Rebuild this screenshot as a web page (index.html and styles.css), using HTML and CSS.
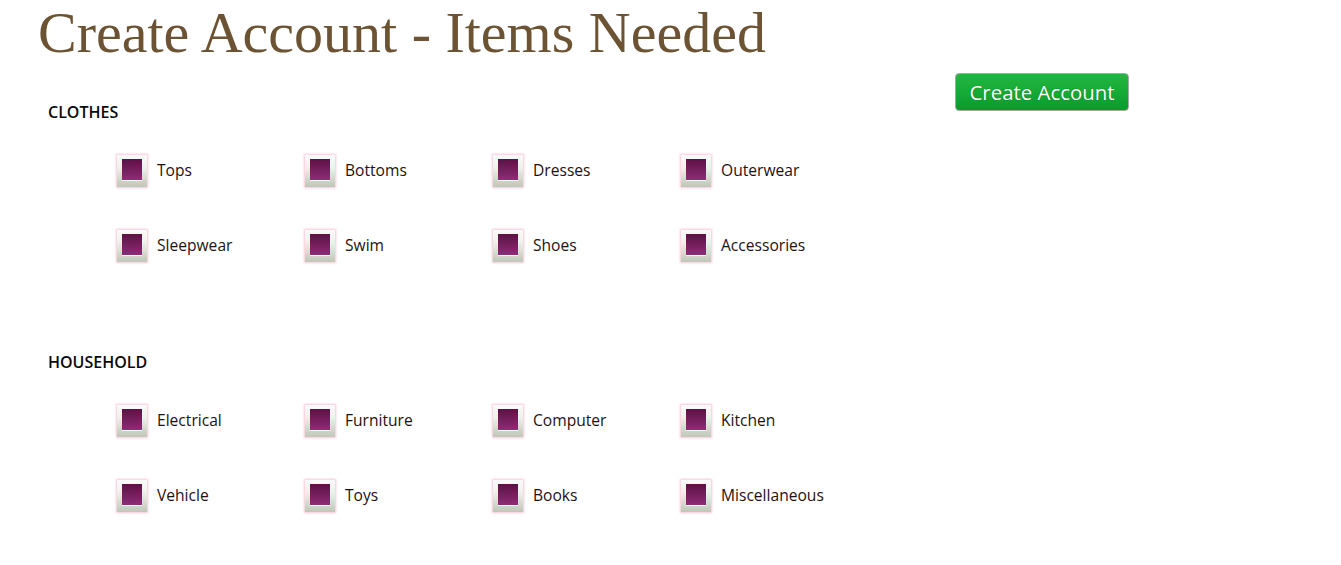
FILE: index.html
```html
<!DOCTYPE html>
<html lang="en">
<head>
<meta charset="utf-8">
<title>Create Account - Items Needed</title>
<link rel="stylesheet" href="styles.css">
</head>
<body>
<h1 class="title">Create Account - Items Needed</h1>
<div class="layout">
  <div class="sections">
    <section class="group">
      <h2 class="group-title">CLOTHES</h2>
      <div class="grid">
        <label class="item"><span class="box"><span class="fill"></span></span><span class="label">Tops</span></label>
        <label class="item"><span class="box"><span class="fill"></span></span><span class="label">Bottoms</span></label>
        <label class="item"><span class="box"><span class="fill"></span></span><span class="label">Dresses</span></label>
        <label class="item"><span class="box"><span class="fill"></span></span><span class="label">Outerwear</span></label>
        <label class="item"><span class="box"><span class="fill"></span></span><span class="label">Sleepwear</span></label>
        <label class="item"><span class="box"><span class="fill"></span></span><span class="label">Swim</span></label>
        <label class="item"><span class="box"><span class="fill"></span></span><span class="label">Shoes</span></label>
        <label class="item"><span class="box"><span class="fill"></span></span><span class="label">Accessories</span></label>
      </div>
    </section>
    <section class="group group-second">
      <h2 class="group-title">HOUSEHOLD</h2>
      <div class="grid">
        <label class="item"><span class="box"><span class="fill"></span></span><span class="label">Electrical</span></label>
        <label class="item"><span class="box"><span class="fill"></span></span><span class="label">Furniture</span></label>
        <label class="item"><span class="box"><span class="fill"></span></span><span class="label">Computer</span></label>
        <label class="item"><span class="box"><span class="fill"></span></span><span class="label">Kitchen</span></label>
        <label class="item"><span class="box"><span class="fill"></span></span><span class="label">Vehicle</span></label>
        <label class="item"><span class="box"><span class="fill"></span></span><span class="label">Toys</span></label>
        <label class="item"><span class="box"><span class="fill"></span></span><span class="label">Books</span></label>
        <label class="item"><span class="box"><span class="fill"></span></span><span class="label">Miscellaneous</span></label>
      </div>
    </section>
  </div>
  <div class="actions">
    <button class="btn" type="button">Create Account</button>
  </div>
</div>
</body>
</html>
```

FILE: styles.css
```css
html, body {
  margin: 0;
  padding: 0;
  background: #ffffff;
}

body {
  font-family: "Open Sans", "Noto Sans", sans-serif;
  color: #1e1414;
}

.title {
  margin: 3px 0 10px 0;
  padding-left: 38px;
  font-family: "Liberation Serif", "DejaVu Serif", serif;
  font-weight: normal;
  font-size: 58px;
  line-height: 60px;
  color: #6c5333;
  white-space: nowrap;
}

.layout {
  display: flex;
  align-items: flex-start;
}

.sections {
  width: 907px;
  padding-left: 48px;
  padding-top: 28px;
}

.group-title {
  margin: 0;
  font-size: 16px;
  line-height: 22px;
  font-weight: 600;
  color: #0a0a0a;
}

.group-second {
  margin-top: 68px;
}

.grid {
  margin-top: 10px;
  margin-left: 69px;
  display: grid;
  grid-template-columns: repeat(4, 188px);
  grid-auto-rows: 75px;
}

.item {
  display: flex;
  align-items: center;
  gap: 10px;
}

.box {
  width: 30px;
  height: 32px;
  box-sizing: border-box;
  padding: 4px 5px 0 5px;
  background: linear-gradient(#fbfbfb 0%, #eef0ea 40%, #bfc7b8 100%);
  box-shadow: 0 0 2px 1px #f7c6d6;
  display: flex;
  justify-content: center;
}

.fill {
  width: 20px;
  height: 21px;
  background: linear-gradient(#5d1144 0%, #7a2162 60%, #8e2d78 100%);
  border-bottom: 1px solid #ffffff;
}

.label {
  font-size: 15.6px;
  line-height: 22px;
  margin-top: -2px;
  color: #1e1212;
}

.actions {
  display: flex;
}

.btn {
  width: 174px;
  height: 38px;
  padding: 0;
  border: 1px solid #a3aaa4;
  border-radius: 4px;
  background: linear-gradient(#23b640 0%, #15a935 55%, #0a9a2c 100%);
  color: #ffffff;
  font-family: "Open Sans", "Liberation Sans", sans-serif;
  font-size: 20.4px;
  line-height: 36px;
  text-shadow: 0 0 1px rgba(0, 60, 0, 0.5);
  cursor: pointer;
}
```
